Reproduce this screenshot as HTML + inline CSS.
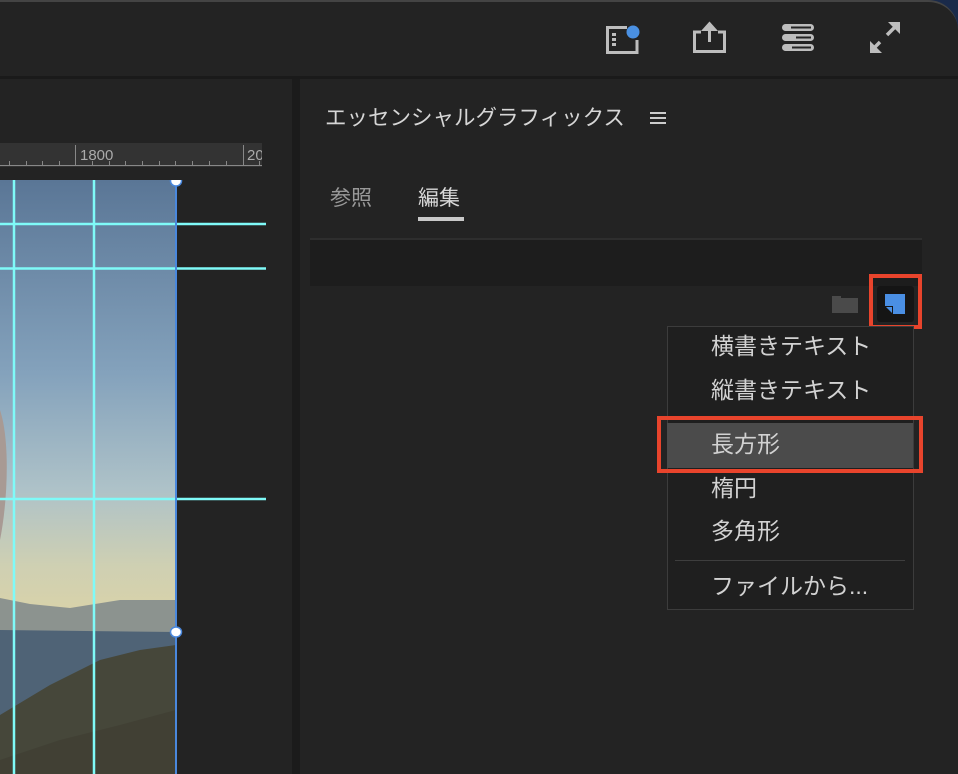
<!DOCTYPE html>
<html><head><meta charset="utf-8"><style>
*{margin:0;padding:0;box-sizing:border-box}
body{width:958px;height:774px;overflow:hidden;background:#1a2a4a;font-family:"Liberation Sans","Noto Sans CJK JP",sans-serif;position:relative}
.a{position:absolute}
.t{position:absolute;color:#d2d2d2;font-size:23px;white-space:nowrap;line-height:1}
</style></head><body>
<div class="a" style="left:0;top:0;width:958px;height:774px;background:#232323;border-top-right-radius:30px;border-top:2px solid #444"></div>
<div class="a" style="left:0;top:76px;width:958px;height:3px;background:#1a1a1a"></div>
<svg class="a" style="left:600px;top:18px" width="320" height="40" viewBox="0 0 320 40">
 <g fill="none" stroke="#bdbdbd" stroke-width="3">
  <path d="M27 9.5H7.5V34.5H37V22"/>
  <path d="M101 14H94.5V33.5H124.5V14H118M109.5 5V24"/>
 </g>
 <path d="M101 13L109.5 3.5L118 13Z" fill="#bdbdbd"/>
 <g fill="#bdbdbd"><rect x="12" y="15" width="4" height="3"/><rect x="12" y="20" width="4" height="3"/><rect x="12" y="25" width="4" height="3"/></g>
 <circle cx="33" cy="14" r="6.5" fill="#4a90e2"/>
 <g fill="#bdbdbd"><rect x="182" y="6" width="32" height="7" rx="3.5"/><rect x="182" y="16" width="32" height="7" rx="3.5"/><rect x="182" y="26" width="32" height="7" rx="3.5"/></g>
 <g fill="#232323"><rect x="191" y="8.5" width="20" height="2"/><rect x="196" y="18.5" width="15" height="2"/><rect x="192" y="28.5" width="19" height="2"/></g>
 <g stroke="#bdbdbd" stroke-width="3.5" fill="none"><path d="M297 7L287 17M280 24L273 31"/></g>
 <path d="M300 4L300 16L288 4Z" fill="#bdbdbd"/>
 <path d="M270 35L270 23L282 35Z" fill="#bdbdbd"/>
</svg>
<div class="a" style="left:292px;top:79px;width:8px;height:695px;background:#1b1b1b"></div>
<div class="a" style="left:0;top:143px;width:262px;height:24px;background:#333"></div>
<svg class="a" style="left:0;top:143px" width="262" height="25">
 <g stroke="#888" stroke-width="1"><line x1="0" y1="22.5" x2="262" y2="22.5"/>
 <line x1="75.5" y1="2" x2="75.5" y2="23"/><line x1="243.5" y1="2" x2="243.5" y2="23"/>
 <g><line x1="9.5" y1="18" x2="9.5" y2="23"/><line x1="26.5" y1="18" x2="26.5" y2="23"/><line x1="42.5" y1="18" x2="42.5" y2="23"/><line x1="59.5" y1="18" x2="59.5" y2="23"/><line x1="92.5" y1="18" x2="92.5" y2="23"/><line x1="109.5" y1="18" x2="109.5" y2="23"/><line x1="125.5" y1="18" x2="125.5" y2="23"/><line x1="142.5" y1="18" x2="142.5" y2="23"/><line x1="159.5" y1="18" x2="159.5" y2="23"/><line x1="175.5" y1="18" x2="175.5" y2="23"/><line x1="192.5" y1="18" x2="192.5" y2="23"/><line x1="209.5" y1="18" x2="209.5" y2="23"/><line x1="226.5" y1="18" x2="226.5" y2="23"/><line x1="259.5" y1="18" x2="259.5" y2="23"/></g></g>
 <text x="80" y="17" fill="#aaa" font-size="15" font-family="Liberation Sans">1800</text>
 <text x="247" y="17" fill="#aaa" font-size="15" font-family="Liberation Sans">20</text>
</svg>
<svg class="a" style="left:0;top:180px" width="270" height="594">
 <defs><linearGradient id="sky" x1="0" y1="0" x2="0" y2="1">
  <stop offset="0" stop-color="#5a7696"/><stop offset="0.45" stop-color="#84a2bc"/><stop offset="0.72" stop-color="#aec2c8"/><stop offset="0.9" stop-color="#cfd0b2"/><stop offset="1" stop-color="#d8d2aa"/></linearGradient></defs>
 <rect x="0" y="0" width="176" height="430" fill="url(#sky)"/>
 <path d="M0 360 C8 320 10 260 0 230Z" fill="#a89a94"/>
 <path d="M0 418 L30 424 L70 428 L120 420 L176 420 L176 458 L0 458Z" fill="#8c938f"/>
 <path d="M0 450 L176 452 L176 600 L0 600Z" fill="#4f6376"/>
 <path d="M0 535 L50 505 L100 480 L140 470 L176 465 L176 600 L0 600Z" fill="#46473a"/>
 <path d="M0 580 L60 560 L120 545 L176 530 L176 600 L0 600Z" fill="#3d3c30" opacity="0.6"/>
 <g stroke="#7ffaf8" stroke-width="2.5"><line x1="14" y1="0" x2="14" y2="594"/><line x1="94" y1="0" x2="94" y2="594"/>
 <line x1="0" y1="44" x2="266" y2="44"/><line x1="0" y1="88.5" x2="266" y2="88.5"/><line x1="0" y1="319" x2="266" y2="319"/></g>
 <line x1="176" y1="0" x2="176" y2="594" stroke="#4a88dd" stroke-width="2"/>
 <ellipse cx="176" cy="1" rx="5.5" ry="5" fill="#fff" stroke="#4a88dd" stroke-width="1.5"/>
 <ellipse cx="176" cy="452" rx="5.5" ry="5" fill="#fff" stroke="#4a88dd" stroke-width="1.5"/>
</svg>
<div class="t" style="left:325px;top:108px;font-size:21.5px;color:#d6d6d6">エッセンシャルグラフィックス</div>
<svg class="a" style="left:650px;top:111px" width="16" height="14"><g stroke="#ccc" stroke-width="2"><line x1="0" y1="2" x2="16" y2="2"/><line x1="0" y1="7" x2="16" y2="7"/><line x1="0" y1="12" x2="16" y2="12"/></g></svg>
<div class="t" style="left:330px;top:188px;font-size:21px;color:#999">参照</div>
<div class="t" style="left:418px;top:188px;font-size:21px;color:#d8d8d8">編集</div>
<div class="a" style="left:418px;top:217px;width:46px;height:4px;background:#c8c8c8"></div>
<div class="a" style="left:310px;top:238px;width:612px;height:48px;background:#1d1d1d;border-top:2px solid #2e2e2e"></div>
<svg class="a" style="left:831px;top:294px" width="28" height="20"><path d="M1 2H10V4H27V19H1Z" fill="#4a4a4a"/></svg>
<div class="a" style="left:869px;top:274px;width:53px;height:55px;border:4px solid #e8442c"></div>
<div class="a" style="left:877px;top:286px;width:37px;height:36px;background:#151515;border-radius:3px"></div>
<svg class="a" style="left:884px;top:293px" width="22" height="22"><path d="M1 1H21V21H1Z" fill="#4a8fe4"/><path d="M1 13H9V21H1Z" fill="#151515"/><path d="M2 14H8V20Z" fill="#4a8fe4"/></svg>
<div class="a" style="left:667px;top:326px;width:247px;height:284px;background:#1f1f1f;border:1px solid #3c3c3c"></div>
<div class="a" style="left:667px;top:423px;width:246px;height:45px;background:#4b4b4b"></div>
<div class="a" style="left:657px;top:416px;width:266px;height:57px;border:4px solid #e8442c"></div>
<div class="a" style="left:675px;top:560px;width:230px;height:1px;background:#3e3e3e"></div>
<div class="t" style="left:711px;top:335px">横書きテキスト</div>
<div class="t" style="left:711px;top:379px">縦書きテキスト</div>
<div class="t" style="left:711px;top:433px">長方形</div>
<div class="t" style="left:711px;top:477px">楕円</div>
<div class="t" style="left:711px;top:520px">多角形</div>
<div class="t" style="left:711px;top:575px">ファイルから...</div>
</body></html>
